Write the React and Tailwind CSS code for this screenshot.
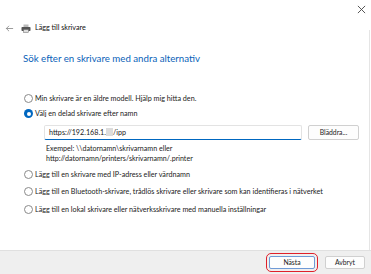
import React from "react";

function Radio({ checked }) {
  return checked ? (
    <span className="w-[9px] h-[9px] rounded-full bg-[#0067c0] flex items-center justify-center shrink-0">
      <span className="w-[4px] h-[4px] rounded-full bg-white" />
    </span>
  ) : (
    <span className="w-[9px] h-[9px] rounded-full border border-[#8a8a8a] bg-white shrink-0" />
  );
}

function Option({ checked, children }) {
  return (
    <div className="flex items-center gap-[2px] h-[10px]">
      <Radio checked={checked} />
      <span className="text-[7.2px] text-[#1b1b1b] leading-none">{children}</span>
    </div>
  );
}

export default function App() {
  return (
    <div
      className="w-[371px] h-[274px] bg-white flex flex-col relative overflow-hidden"
      style={{ fontFamily: 'Lato, "Noto Sans", sans-serif' }}
    >
      <div className="h-[18px] flex justify-end items-center pr-[5px]">
        <svg width="9" height="9" viewBox="0 0 10 10">
          <path d="M1 1 L9 9 M9 1 L1 9" stroke="#444" strokeWidth="1" />
        </svg>
      </div>
      <div className="absolute right-0 top-[30px] bottom-[24px] w-[2px] border-l border-[#e5e5e5]" />
      <div className="flex-1 flex flex-col">
        <div className="flex items-center h-[20px] pl-[5px]">
          <svg width="9" height="9" viewBox="0 0 10 10" className="mr-[7px]">
            <path d="M9 5 H1.5 M4.5 2 L1.5 5 L4.5 8" stroke="#777" strokeWidth="0.8" fill="none" />
          </svg>
          <svg width="10" height="9" viewBox="0 0 10 9" className="mr-[4px]">
            <rect x="2.5" y="0.5" width="5" height="2.5" fill="#bbb" />
            <rect x="0.5" y="3" width="9" height="4" rx="0.8" fill="#555" />
            <rect x="2.5" y="5.5" width="5" height="3" fill="#ddd" stroke="#666" strokeWidth="0.5" />
          </svg>
          <span className="text-[7.2px] text-[#111] leading-none">Lägg till skrivare</span>
        </div>
        <div className="pl-[23px] pt-[16px] text-[9.7px] text-[#0a5fb8] leading-none">
          Sök efter en skrivare med andra alternativ
        </div>
        <div className="pl-[24px] pt-[30px] flex flex-col">
          <Option>Min skrivare är en äldre modell. Hjälp mig hitta den.</Option>
          <div className="h-[5px]" />
          <Option checked>Välj en delad skrivare efter namn</Option>
          <div className="flex items-start gap-[6px] mt-[6px] ml-[20px]">
            <div className="w-[258px] h-[15px] border border-[#e3e3e3] border-b-[#0067c0] border-b-[1.5px] rounded-[2px] flex items-center pl-[4px] text-[7.2px] text-[#1b1b1b] leading-none">
              https://192.168.1.<span className="inline-block w-[7px] h-[8px] bg-[#dcdcdc]" />/ipp
            </div>
            <div className="w-[51px] h-[15px] border border-[#d0d0d0] rounded-[2px] bg-[#fdfdfd] flex items-center justify-center text-[6.8px] text-[#1b1b1b] leading-none">
              Bläddra...
            </div>
          </div>
          <div className="ml-[22px] mt-[4px] text-[7.1px] text-[#1b1b1b] leading-[10px]">
            <div>Exempel: \\datornamn\skrivarnamn eller</div>
            <div>http://datornamn/printers/skrivarnamn/.printer</div>
          </div>
          <div className="h-[6px]" />
          <Option>Lägg till en skrivare med IP-adress eller värdnamn</Option>
          <div className="h-[7px]" />
          <Option>Lägg till en Bluetooth-skrivare, trådlös skrivare eller skrivare som kan identifieras i nätverket</Option>
          <div className="h-[8px]" />
          <Option>Lägg till en lokal skrivare eller nätverksskrivare med manuella inställningar</Option>
        </div>
      </div>
      <div className="h-[24px] border-t border-[#e0e0e0] bg-[#efefef] flex items-center justify-end pr-[6px] gap-[7px]">
        <div className="rounded-[5px] border-[1.5px] border-[#e0202a] p-[2px]">
          <div className="w-[46px] h-[13px] border border-[#6f9ad6] rounded-[2px] bg-[#fdfdfd] flex items-center justify-center text-[6.8px] text-[#1b1b1b] leading-none">
            Nästa
          </div>
        </div>
        <div className="w-[40px] h-[13px] border border-[#d0d0d0] rounded-[2px] bg-[#fdfdfd] flex items-center justify-center text-[6.8px] text-[#1b1b1b] leading-none">
          Avbryt
        </div>
      </div>
    </div>
  );
}
